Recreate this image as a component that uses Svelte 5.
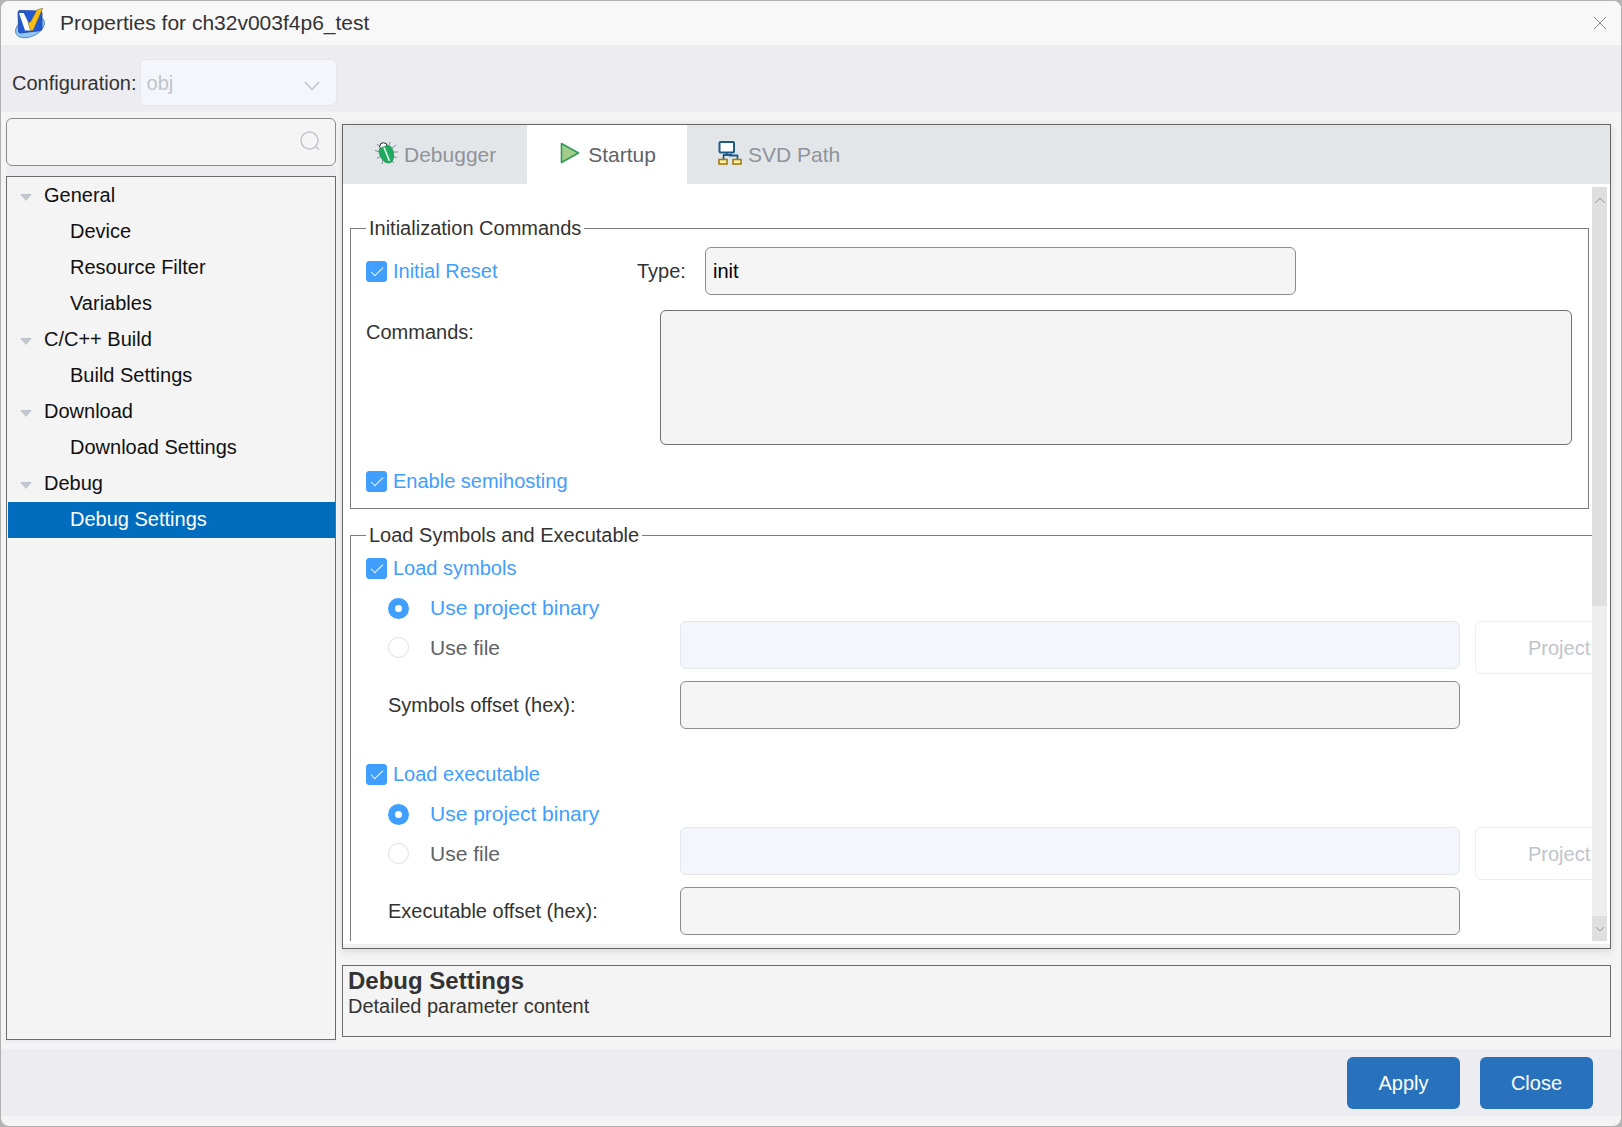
<script lang="ts">
    interface TreeGroup {
        label: string;
        children: string[];
    }

    interface LoadSection {
        id: string;
        title: string;
        offsetLabel: string;
        enabled: boolean;
        source: string;
        file: string;
        offset: string;
    }

    const groups: TreeGroup[] = [
        { label: 'General', children: ['Device', 'Resource Filter', 'Variables'] },
        { label: 'C/C++ Build', children: ['Build Settings'] },
        { label: 'Download', children: ['Download Settings'] },
        { label: 'Debug', children: ['Debug Settings'] },
    ];

    const tabs = ['Debugger', 'Startup', 'SVD Path'];

    // State
    let selected = $state('Debug Settings');
    let activeTab = $state('Startup');
    let search = $state('');
    let initialReset = $state(true);
    let resetType = $state('init');
    let commands = $state('');
    let semihosting = $state(true);
    let sections = $state<LoadSection[]>([
        {
            id: 'symbols',
            title: 'Load symbols',
            offsetLabel: 'Symbols offset (hex):',
            enabled: true,
            source: 'project',
            file: '',
            offset: '',
        },
        {
            id: 'executable',
            title: 'Load executable',
            offsetLabel: 'Executable offset (hex):',
            enabled: true,
            source: 'project',
            file: '',
            offset: '',
        },
    ]);
</script>

<div class="window">
    <header class="title-bar">
        <svg class="logo" viewBox="0 0 30 30" aria-hidden="true">
            <ellipse cx="15" cy="19" rx="15.500" ry="9.500" transform="rotate(-26 15 19)" fill="#8fc8f8" stroke="#4f83b0" stroke-width=".8" />
            <path d="M5 2.500L25 3q2 0 2 2v15.500q0 2-2 2.200L5.500 25q-2 0-2-2L3 4.500q0-2 2-2z" fill="#2259d3" stroke="#1b459f" stroke-width=".8" />
            <path d="M4 5h4.700L14.500 17l1.500 5.500h-6z" fill="#fff" />
            <path d="M13 14.500l2.500-.5L22 1.800 27.800.3 18 22.500h-2.500z" fill="#f8be12" stroke="#6b5a28" stroke-width=".5" />
        </svg>
        <h1>Properties for ch32v003f4p6_test</h1>
        <button class="close-icon" aria-label="Close window">
            <svg viewBox="0 0 14 14"><path d="M1 1l12 12M13 1L1 13" /></svg>
        </button>
    </header>

    <div class="config-bar">
        <label for="configuration">Configuration:</label>
        <div class="select-wrap">
            <select id="configuration" disabled>
                <option>obj</option>
            </select>
            <svg viewBox="0 0 16 10" aria-hidden="true"><path d="M1 1l7 7.500L15 1" /></svg>
        </div>
    </div>

    <main class="body">
        <aside class="sidebar">
            <div class="search">
                <input type="text" aria-label="Search" bind:value={search} />
                <svg viewBox="0 0 20 20" aria-hidden="true">
                    <circle cx="9.500" cy="9.500" r="8.500" />
                    <path d="M15.500 15.500l3.500 3" />
                </svg>
            </div>
            <ul class="tree">
                {#each groups as group (group.label)}
                    <li>
                        <button class="node parent">
                            <span class="caret"></span>{group.label}
                        </button>
                        <ul>
                            {#each group.children as child (child)}
                                <li>
                                    <button
                                        class="node child"
                                        class:selected={selected === child}
                                        onclick={() => (selected = child)}
                                    >{child}</button>
                                </li>
                            {/each}
                        </ul>
                    </li>
                {/each}
            </ul>
        </aside>

        <div class="content">
            <section class="panel">
                <div class="tabs" role="tablist">
                    {#each tabs as tab (tab)}
                        <button
                            class="tab"
                            class:active={activeTab === tab}
                            role="tab"
                            aria-selected={activeTab === tab}
                            onclick={() => (activeTab = tab)}
                        >
                            {#if tab === 'Debugger'}
                                <svg width="24" height="24" viewBox="0 0 24 24" aria-hidden="true">
                                    <path d="M7 7L3 3M5.500 11L1 9.500M7 15l-4 2.500M9 19l-1 4M15 4l1-3M18 7l4-3M19 11h5M19 15l4 2M17 19l3 3" fill="none" stroke="#888" />
                                    <circle cx="9.500" cy="5.500" r="3.800" fill="#fff" stroke="#222" />
                                    <path d="M5 9c1-2 8-5.500 11-4 4 3 4.500 12 2 15.500-2 2-5 1.500-7 .5C7 18 5 13 5 9z" fill="#1fab5f" stroke="#168249" stroke-width=".7" />
                                    <path d="M10 6.500L15.500 20" stroke="#e8fff0" stroke-width="1.600" />
                                </svg>
                            {:else if tab === 'Startup'}
                                <svg width="20" height="22" viewBox="0 0 20 22" aria-hidden="true">
                                    <path d="M1.500 1.500L18.500 11 1.500 20.500z" fill="#a2cc88" stroke="#329a5c" stroke-width="1.600" stroke-linejoin="round" />
                                </svg>
                            {:else}
                                <svg width="24" height="24" viewBox="0 0 24 24" aria-hidden="true">
                                    <rect x="1.500" y="1" width="14.500" height="10.500" rx="1" fill="#fff" stroke="#1c5a88" stroke-width="2" />
                                    <path d="M9 12v2M5 14h9M5.500 14v4M11 14.500h8.500V18" fill="none" stroke="#1c5a88" stroke-width="1.800" />
                                    <rect x="1" y="18.500" width="8" height="4.500" fill="#fff3a3" stroke="#a17b16" stroke-width="1.600" />
                                    <rect x="15" y="18.500" width="8" height="4.500" fill="#fff3a3" stroke="#a17b16" stroke-width="1.600" />
                                </svg>
                            {/if}
                            {tab}
                        </button>
                    {/each}
                </div>

                <div class="scroll-area">
                    <form class="viewport">
                        <fieldset>
                            <legend>Initialization Commands</legend>
                            <div class="reset-row">
                                <label class="check">
                                    <input type="checkbox" bind:checked={initialReset} />
                                    Initial Reset
                                </label>
                                <label for="reset-type">Type:</label>
                                <input id="reset-type" class="text-box" type="text" bind:value={resetType} />
                            </div>
                            <div class="commands-row">
                                <label for="commands">Commands:</label>
                                <textarea id="commands" bind:value={commands}></textarea>
                            </div>
                            <label class="check">
                                <input type="checkbox" bind:checked={semihosting} />
                                Enable semihosting
                            </label>
                        </fieldset>

                        <fieldset class="wide">
                            <legend>Load Symbols and Executable</legend>
                            {#each sections as section (section.id)}
                                <div class="load-section">
                                    <label class="check">
                                        <input type="checkbox" bind:checked={section.enabled} />
                                        {section.title}
                                    </label>
                                    <div class="load-grid">
                                        <label class="radio first">
                                            <input type="radio" name={section.id} value="project" bind:group={section.source} />
                                            <span>Use project binary</span>
                                        </label>
                                        <label class="radio">
                                            <input type="radio" name={section.id} value="file" bind:group={section.source} />
                                            <span>Use file</span>
                                        </label>
                                        <input
                                            class="text-box"
                                            type="text"
                                            aria-label="File path"
                                            disabled={section.source !== 'file'}
                                            bind:value={section.file}
                                        />
                                        <button type="button" class="browse" disabled={section.source !== 'file'}>Project</button>
                                        <label class="offset" for="{section.id}-offset">{section.offsetLabel}</label>
                                        <input id="{section.id}-offset" class="text-box offset" type="text" bind:value={section.offset} />
                                    </div>
                                </div>
                            {/each}
                        </fieldset>
                    </form>

                    <div class="scrollbar" aria-hidden="true">
                        <div class="arrow">
                            <svg viewBox="0 0 12 8"><path d="M1 7l5-5 5 5" /></svg>
                        </div>
                        <div class="thumb"></div>
                        <div class="track"></div>
                        <div class="arrow">
                            <svg viewBox="0 0 12 8"><path d="M2 2l4 4 4-4" /></svg>
                        </div>
                    </div>
                </div>
            </section>

            <section class="description">
                <h2>{selected}</h2>
                <p>Detailed parameter content</p>
            </section>
        </div>
    </main>

    <footer class="footer">
        <button>Apply</button>
        <button>Close</button>
    </footer>
</div>

<style>
    :global(body) {
        background: #b4b4b4;
    }
    .window,
    .window :global(*) {
        box-sizing: border-box;
    }
    .window {
        display: flex;
        flex-direction: column;
        height: 100vh;
        padding-bottom: 10px;
        border: 1px solid #b0b0b0;
        border-radius: 9px;
        overflow: hidden;
        background: #f4f4f4;
        color: #333;
        font-family: "Liberation Sans", Arial, sans-serif;
        font-size: 20px;
        line-height: 24px;
    }
    button,
    input,
    select,
    textarea {
        margin: 0;
        font: inherit;
    }
    h1,
    h2,
    p {
        margin: 0;
    }
    ul {
        margin: 0;
        padding: 0;
        list-style: none;
    }

    .title-bar {
        display: flex;
        align-items: center;
        gap: 15px;
        height: 44px;
        padding: 0 14px;
        background: #f8f8f8;
    }
    .title-bar h1 {
        flex: 1;
        font-size: 21px;
        font-weight: normal;
    }
    .logo {
        width: 30px;
        height: 30px;
        overflow: visible;
    }
    .close-icon {
        display: flex;
        padding: 0;
        border: 0;
        background: none;
    }
    .close-icon svg {
        width: 14px;
        height: 14px;
        stroke: #888;
    }

    .config-bar {
        display: flex;
        align-items: center;
        gap: 3px;
        height: 67px;
        padding: 14px 11px 6px;
        background: #edecf1;
    }
    .select-wrap {
        position: relative;
        width: 197px;
    }
    .select-wrap select {
        display: block;
        width: 100%;
        height: 47px;
        padding: 0 6px;
        border: 1px solid #e4e7ed;
        border-radius: 6px;
        appearance: none;
        background: #f3f6fa;
        color: #c0c4cc;
        opacity: 1;
    }
    .select-wrap svg {
        position: absolute;
        top: 22px;
        right: 17px;
        width: 16px;
        height: 10px;
        fill: none;
        stroke: #c0c4cc;
        stroke-width: 1.4;
        pointer-events: none;
    }

    .body {
        display: flex;
        flex: 1;
        gap: 6px;
        min-height: 0;
        padding: 6px 10px 6px 5px;
    }
    .sidebar {
        display: flex;
        flex-direction: column;
        gap: 10px;
        width: 330px;
        padding-bottom: 3px;
        background: #edecf1;
    }
    .search {
        position: relative;
        background: #f4f4f4;
    }
    .search input {
        display: block;
        width: 100%;
        height: 48px;
        padding: 0 48px 0 8px;
        border: 1px solid #8c8c8c;
        border-radius: 6px;
        background: #f5f5f5;
    }
    .search svg {
        position: absolute;
        top: 13px;
        right: 16px;
        width: 20px;
        height: 20px;
        fill: none;
        stroke: #c0c4cc;
        stroke-width: 1.5;
    }
    .tree {
        flex: 1;
        padding: 1px 0 0 1px;
        border: 1px solid #6b6b6b;
        background: #f4f4f4;
    }
    .node {
        display: flex;
        align-items: center;
        width: 100%;
        height: 36px;
        padding: 0 0 2px;
        border: 0;
        background: none;
        color: #111;
        text-align: left;
    }
    .parent {
        gap: 12px;
        padding-left: 12px;
    }
    .child {
        padding-left: 62px;
    }
    .child.selected {
        background: #006cbe;
        color: #fff;
    }
    .caret {
        margin-top: 4px;
        border: 6px solid transparent;
        border-top: 7px solid #c0c4cc;
        border-bottom: 0;
    }

    .content {
        display: flex;
        flex: 1;
        flex-direction: column;
        gap: 16px;
        min-width: 0;
        padding: 6px 0;
    }
    .panel {
        display: flex;
        flex: 1;
        flex-direction: column;
        min-height: 0;
        padding-bottom: 4px;
        border: 1px solid #666;
        background: #f0f0f0;
        box-shadow: 0 2px 8px rgba(0, 0, 0, 0.12);
    }
    .tabs {
        display: flex;
        height: 59px;
        background: #e2e6e9;
    }
    .tab {
        display: flex;
        align-items: center;
        gap: 6px;
        padding: 0 31px;
        border: 0;
        background: none;
        color: #909399;
        font-size: 21px;
    }
    .tab svg {
        margin-bottom: 4px;
    }
    .tab.active {
        gap: 8px;
        padding: 0 31px 0 33px;
        background: #fff;
        color: #606266;
    }

    .scroll-area {
        display: flex;
        flex: 1;
        min-height: 0;
        padding: 3px;
        background: #fff;
    }
    .viewport {
        flex: 1;
        min-width: 0;
        padding: 29px 3px 0 4px;
        overflow: hidden;
    }
    fieldset {
        min-width: 0;
        margin: 0 0 14px;
        padding: 7px 16px 15px 15px;
        border: 1px solid #7d7d7d;
    }
    fieldset.wide {
        width: calc(100% + 79px);
        padding-top: 9px;
    }
    legend {
        padding: 0 3px;
    }
    .text-box {
        width: 100%;
        height: 48px;
        padding: 0 7px;
        border: 1px solid #8c8c8c;
        border-radius: 6px;
        background: #f5f5f5;
        color: #000;
    }
    .text-box:disabled {
        border-color: #e4e7ed;
        background: #f3f6fa;
    }
    .check {
        display: flex;
        align-items: center;
        gap: 6px;
        color: #409eff;
    }
    .check input {
        display: grid;
        place-items: center;
        width: 21px;
        height: 21px;
        border: 1px solid #dcdfe6;
        border-radius: 3px;
        appearance: none;
        background: #fff;
    }
    .check input:checked {
        border-color: #409eff;
        background: #409eff;
    }
    .check input:checked::after {
        width: 6px;
        height: 12px;
        margin-bottom: 3px;
        border: solid #fff;
        border-width: 0 1px 1px 0;
        box-sizing: border-box;
        content: '';
        transform: rotate(45deg);
    }
    .reset-row {
        display: grid;
        grid-template-columns: 271px 68px 49%;
        align-items: center;
    }
    .commands-row {
        display: grid;
        grid-template-columns: 294px 1fr;
        margin: 15px 0 24px;
    }
    .commands-row label {
        padding-top: 10px;
    }
    textarea {
        display: block;
        height: 135px;
        padding: 8px;
        border: 1px solid #707070;
        border-radius: 6px;
        background: #f4f4f4;
        resize: none;
    }

    .load-section {
        margin-bottom: 33px;
    }
    .load-grid {
        display: grid;
        grid-template-columns: 277px 1fr 176px;
        column-gap: 15px;
        padding: 16px 0 0 22px;
    }
    .radio {
        display: flex;
        align-items: center;
        gap: 21px;
        color: #606266;
        font-size: 21px;
    }
    .radio.first {
        grid-column: 1 / -1;
        margin-bottom: 1px;
    }
    .radio input {
        width: 21px;
        height: 21px;
        border: 1px solid #dcdfe6;
        border-radius: 50%;
        appearance: none;
        background: #fff;
    }
    .radio input:checked {
        border: 7px solid #409eff;
    }
    .radio input:checked + span {
        color: #409eff;
    }
    .browse {
        height: 53px;
        padding: 0 52px;
        border: 1px solid #ebeef5;
        border-radius: 6px;
        background: #fff;
        color: #c0c4cc;
        text-align: left;
    }
    .offset {
        align-self: center;
        margin-top: 7px;
    }

    .scrollbar {
        display: flex;
        flex-direction: column;
        width: 15px;
        background: #eee;
    }
    .arrow {
        display: grid;
        place-items: center;
        height: 25px;
        background: #dfdfdf;
    }
    .arrow svg {
        width: 12px;
        height: 8px;
        fill: none;
        stroke: #999;
    }
    .thumb {
        flex: 56;
        background: #dfdfdf;
    }
    .track {
        flex: 44;
    }

    .description {
        min-height: 72px;
        padding: 2px 5px;
        border: 1px solid #6b6b6b;
        background: #f4f4f4;
    }
    .description h2 {
        font-size: 24px;
        line-height: 26px;
    }

    .footer {
        display: flex;
        align-items: center;
        justify-content: flex-end;
        gap: 20px;
        height: 67px;
        padding: 0 28px;
        background: #edecf1;
    }
    .footer button {
        width: 113px;
        height: 52px;
        border: 0;
        border-radius: 6px;
        background: #2872bd;
        color: #fff;
    }
</style>
